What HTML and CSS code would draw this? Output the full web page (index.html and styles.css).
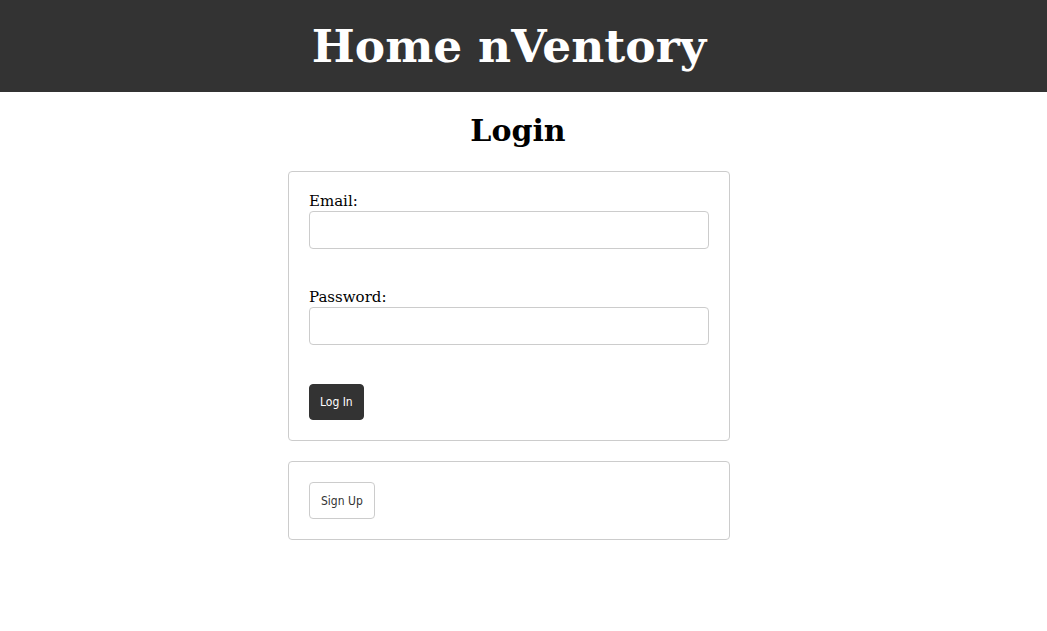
FILE: index.html
```html
<!DOCTYPE html>
<html lang="en">
<head>
<meta charset="utf-8">
<title>Home nVentory - Login</title>
<link rel="stylesheet" href="styles.css">
</head>
<body>
<header class="site-header">
  <div class="page">
    <h1 class="site-title">Home nVentory</h1>
  </div>
</header>
<main class="page">
  <h2 class="page-title">Login</h2>
  <div class="column">
    <form class="card">
      <div class="field">
        <label class="label" for="email">Email:</label>
        <input class="input" id="email" type="email">
      </div>
      <div class="field">
        <label class="label" for="password">Password:</label>
        <input class="input" id="password" type="password">
      </div>
      <button class="btn btn-dark" type="button">Log In</button>
    </form>
    <div class="card">
      <button class="btn btn-light" type="button">Sign Up</button>
    </div>
  </div>
</main>
</body>
</html>
```
FILE: styles.css
```css
html, body {
  margin: 0;
  padding: 0;
  background: #fff;
}
body {
  font-family: "DejaVu Serif", Georgia, serif;
  color: #000;
}
.page {
  padding-right: 29px;
  display: flex;
  flex-direction: column;
  align-items: center;
}
.site-header {
  background: #333;
  height: 92px;
}
.site-title {
  margin: 0;
  color: #fff;
  font-size: 45.5px;
  font-weight: bold;
  line-height: 92px;
}
.page-title {
  margin: 17px 0 0 0;
  font-size: 30px;
  font-weight: bold;
  line-height: 44px;
  padding-left: 18px;
}
.column {
  margin-top: 18px;
  width: 442px;
  display: flex;
  flex-direction: column;
  gap: 20px;
}
.card {
  margin: 0;
  border: 1px solid #ccc;
  border-radius: 4px;
  padding: 20px;
  display: flex;
  flex-direction: column;
  align-items: flex-start;
}
.field {
  width: 100%;
  display: flex;
  flex-direction: column;
  margin-bottom: 39px;
}
.label {
  font-size: 15px;
  line-height: 19px;
}
.input {
  box-sizing: border-box;
  width: 100%;
  height: 38px;
  margin: 0;
  border: 1px solid #ccc;
  border-radius: 4px;
  padding: 6px 10px;
  font-family: "DejaVu Sans", sans-serif;
  font-size: 14px;
}
.btn {
  box-sizing: border-box;
  height: 36px;
  padding: 0 10px;
  border-radius: 4px;
  font-family: "DejaVu Sans Condensed", "DejaVu Sans", sans-serif;
  font-size: 12px;
  cursor: pointer;
}
.btn-dark {
  background: #333;
  color: #fff;
  border: 1px solid #333;
}
.btn-light {
  height: 37px;
  background: #fff;
  color: #333;
  border: 1px solid #ccc;
  padding: 0 11px;
}
```
